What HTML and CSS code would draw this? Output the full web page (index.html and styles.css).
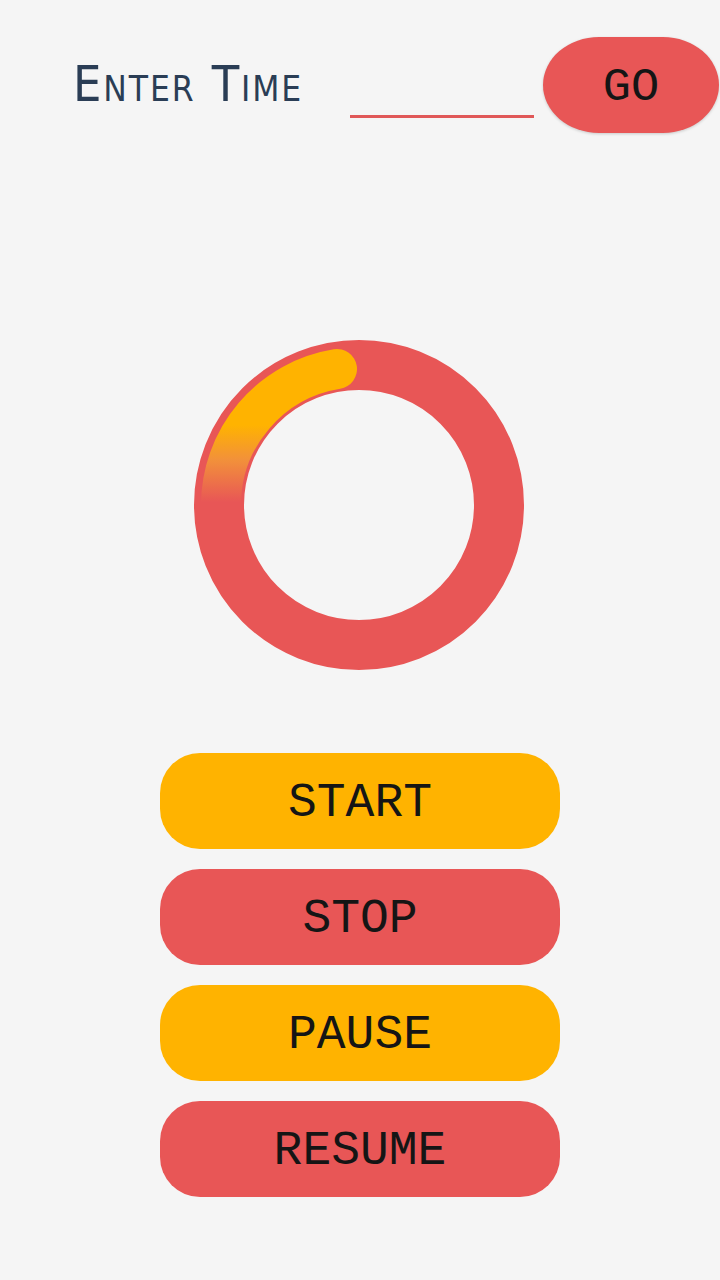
FILE: index.html
```html
<!DOCTYPE html>
<html>
<head>
<meta charset="utf-8">
<link rel="stylesheet" href="styles.css">
</head>
<body>
<div class="app">
  <header class="top">
    <h1 class="title">Enter Time</h1>
    <div class="field"></div>
    <button class="go">GO</button>
  </header>
  <div class="ring-wrap">
    <svg class="ring" width="330" height="330" viewBox="194 340 330 330">
      <defs>
        <linearGradient id="g" gradientUnits="userSpaceOnUse" x1="0" y1="425" x2="0" y2="502">
          <stop offset="0" stop-color="#ffb300"/>
          <stop offset="0.45" stop-color="#f2913a"/>
          <stop offset="1" stop-color="#e85656"/>
        </linearGradient>
      </defs>
      <circle cx="359" cy="505" r="140" fill="none" stroke="#e85656" stroke-width="50"/>
      <path d="M 221 505 A 138 138 0 0 1 337 369" fill="none" stroke="url(#g)" stroke-width="40" stroke-linecap="round"/>
    </svg>
  </div>
  <div class="buttons">
    <button class="btn yellow">START</button>
    <button class="btn red">STOP</button>
    <button class="btn yellow">PAUSE</button>
    <button class="btn red">RESUME</button>
  </div>
</div>
</body>
</html>
```
FILE: styles.css
```css
html, body {
  margin: 0;
  padding: 0;
  background: #f5f5f5;
}
.app {
  width: 720px;
  height: 1280px;
  display: flex;
  flex-direction: column;
}
.top {
  display: flex;
  align-items: center;
  padding-top: 37px;
  padding-left: 73px;
}
.title {
  margin: 0;
  width: 277px;
  font-family: "Liberation Sans Narrow", "DejaVu Sans Condensed", sans-serif;
  font-stretch: condensed;
  font-weight: normal;
  font-variant: small-caps;
  font-size: 50px;
  letter-spacing: 1.9px;
  color: #2a3d55;
  line-height: 1;
  padding-bottom: 2px;
}
.field {
  align-self: flex-end;
  width: 184px;
  height: 0;
  border-bottom: 3px solid #e05858;
  margin-bottom: 15px;
}
.go {
  margin-left: 9px;
  width: 176px;
  height: 96px;
  border: none;
  border-radius: 56px / 48px;
  background: #e85656;
  box-shadow: 0 1px 3px rgba(0,0,0,0.18);
  font-family: "Liberation Mono", monospace;
  font-size: 47px;
  color: #151515;
  padding: 0;
  padding-top: 4px;
}
.ring-wrap {
  display: flex;
  justify-content: center;
  margin-top: 207px;
  padding-right: 2px;
}
.ring {
  display: block;
}
.buttons {
  display: flex;
  flex-direction: column;
  align-items: center;
  gap: 20px;
  margin-top: 83px;
}
.btn {
  width: 400px;
  height: 96px;
  border: none;
  border-radius: 40px;
  font-family: "Liberation Mono", monospace;
  font-size: 48px;
  color: #151515;
  padding: 0;
  padding-top: 4px;
}
.yellow { background: #ffb300; }
.red { background: #e85656; }
```
